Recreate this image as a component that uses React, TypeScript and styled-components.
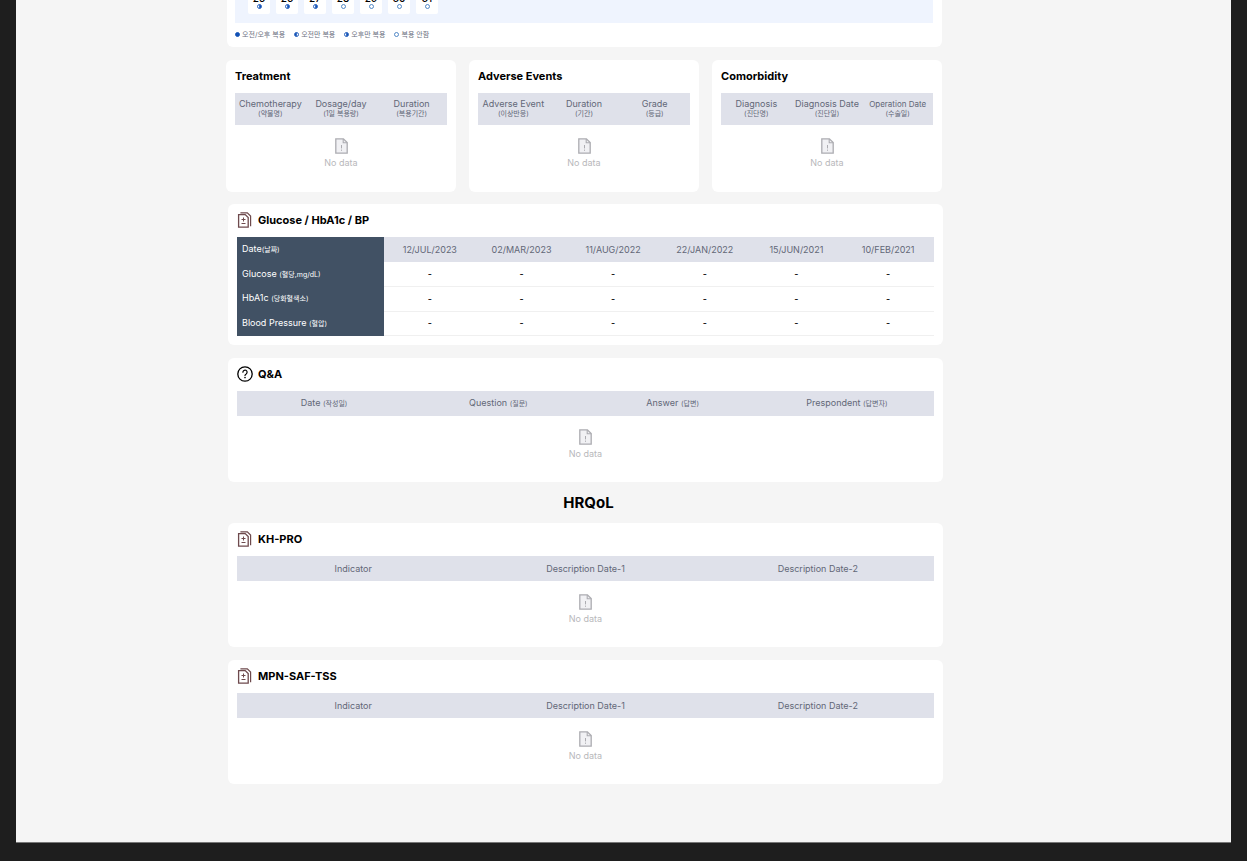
import React from "react";
import styled, { createGlobalStyle } from "styled-components";

const GlobalStyle = createGlobalStyle`
  * { box-sizing: border-box; }
  body {
    margin: 0;
    background: #1e1e1e;
    color: #000;
    font-family: Inter, "Noto Sans CJK KR", sans-serif;
  }
`;

const Page = styled.div`
  min-height: 100vh;
  padding: 0 16px 18px;
  background: #1e1e1e;
`;

const Sheet = styled.main`
  padding: 0 288px 58px 210px;
  background: #f5f5f5;
  border-bottom: 1px solid #777;
`;

const Overview = styled.div`
  display: flex;
  flex-direction: column;
  gap: 13px;
  margin-right: 1px;
`;

const Sections = styled.div`
  display: flex;
  flex-direction: column;
  gap: 13px;
  margin: 12px 0 0 2px;
`;

const Card = styled.section`
  padding: 0 9px 9px;
  background: #fff;
  border-radius: 6px;
`;

const CalendarCard = styled.section`
  display: flex;
  flex-direction: column;
  justify-content: flex-end;
  height: 47px;
  margin-left: 1px;
  padding: 0 9px 7px 8px;
  overflow: hidden;
  background: #fff;
  border-radius: 0 0 6px 6px;
`;

const Week = styled.div`
  display: flex;
  flex: none;
  gap: 6px;
  padding: 0 13px 9px;
  background: #eff4fe;
`;

const Day = styled.div`
  display: flex;
  flex-direction: column;
  align-items: center;
  gap: 1px;
  width: 22px;
  padding: 3px 0 5px;
  background: #fff;
  border-radius: 2px;
  font-size: 10px;
  font-weight: 500;
  line-height: 10px;
`;

const Legend = styled.ul`
  display: flex;
  flex: none;
  gap: 9px;
  margin: 6px 0 0;
  padding: 0;
  list-style: none;
`;

const LegendItem = styled.li`
  display: flex;
  align-items: center;
  gap: 2px;
  color: #6b7080;
  font-size: 7px;
  line-height: 11px;
  white-space: nowrap;
`;

const Trio = styled.div`
  display: grid;
  grid-template-columns: repeat(3, 1fr);
  gap: 13px;
`;

const SmallCard = styled(Card)`
  height: 132px;
`;

const CardHead = styled.div`
  display: flex;
  align-items: center;
  gap: 5px;
  height: 33px;
  padding-bottom: 1px;
`;

const CardTitle = styled.h2`
  margin: 0;
  font-size: 11px;
  font-weight: 700;
  line-height: 16px;
`;

const GroupTitle = styled.h1`
  margin: 0;
  padding-left: 6px;
  font-size: 15px;
  font-weight: 700;
  line-height: 15px;
  text-align: center;
`;

const Table = styled.table`
  width: 100%;
  border-collapse: collapse;
  table-layout: fixed;
  font-size: 9px;
  line-height: 12px;
`;

const HeadCell = styled.th<{ $tall?: boolean }>`
  height: ${(p) => (p.$tall ? 32 : 25)}px;
  padding: 0;
  background: #dfe1ea;
  color: #626777;
  font-weight: 400;
  line-height: ${(p) => (p.$tall ? 10 : 12)}px;
  text-align: center;
  white-space: nowrap;
`;

const Compact = styled.span`
  font-size: 8px;
`;

const Korean = styled.span<{ $block?: boolean }>`
  display: ${(p) => (p.$block ? "block" : "inline")};
  font-size: 7px;
`;

const VitalsTable = styled(Table)`
  height: 99px;
`;

const LabelCol = styled.col`
  width: 147px;
`;

const RowLabel = styled.th`
  height: 24px;
  padding: 0 5px;
  background: #415164;
  color: #fff;
  font-weight: 400;
  text-align: left;
  white-space: nowrap;
`;

const ValueCell = styled.td`
  padding: 0;
  border-bottom: 1px solid #f0f0f0;
  font-weight: 500;
  text-align: center;
`;

const EmptyCell = styled.td`
  height: 57px;
  padding: 13px 0 0;
  vertical-align: top;
`;

const Empty = styled.div`
  display: flex;
  flex-direction: column;
  align-items: center;
  gap: 3px;
  color: #b8b8bb;
  font-size: 9px;
  line-height: 12px;
`;

type DoseKind = "both" | "am" | "pm" | "none";

const Dose = ({ kind }: { kind: DoseKind }) => (
  <svg width="5" height="5" viewBox="0 0 10 10" aria-hidden="true">
    <circle cx="5" cy="5" r="4" fill={kind === "both" ? "#1251b5" : "#fff"} stroke={kind === "none" ? "#3f7cc0" : "#1251b5"} strokeWidth="1.8" />
    {kind === "am" && <path d="M5.6 1a4 4 0 0 0 0 8z" fill="#1251b5" />}
    {kind === "pm" && <path d="M4.4 1a4 4 0 0 1 0 8z" fill="#1251b5" />}
  </svg>
);

const NoData = () => (
  <Empty>
    <svg width="13" height="16" viewBox="0 0 13 16" fill="none" stroke="#acacb1" aria-hidden="true">
      <path d="M.8.8h7.6l3.8 3.8v10.6H.8z" fill="#f1f1f4" strokeWidth="1.3" />
      <path d="M8.2 1v3.8h3.8" strokeWidth="1.1" />
      <path d="M6.5 7v3.4M6.5 11.6v1.2" strokeWidth="1" />
    </svg>
    No data
  </Empty>
);

const RecordIcon = () => (
  <svg width="16" height="16" viewBox="0 0 16 16" fill="none" stroke="#6e4a4d" aria-hidden="true">
    <path d="M3.4.8h6.9l3.3 3.3v10.1" strokeWidth="1.2" />
    <path d="M1.6 2.6h6.6l3 3v9.6H1.6z" strokeWidth="1.3" />
    <path d="M6.5 5.5v4M4.5 7.5h4M4.5 11.5h4" strokeWidth="1" />
  </svg>
);

const QuestionIcon = () => (
  <svg width="16" height="16" viewBox="0 0 16 16" fill="none" stroke="#000" strokeLinecap="round" aria-hidden="true">
    <circle cx="8" cy="8" r="7.2" strokeWidth="1.3" />
    <path d="M5.9 6.2a2.1 2.1 0 1 1 3.3 1.7c-.8.5-1.2.8-1.2 1.6" strokeWidth="1.2" />
    <circle cx="8" cy="11.6" r=".8" fill="#000" stroke="none" />
  </svg>
);

const days: [number, DoseKind][] = [
  [25, "pm"], [26, "pm"], [27, "pm"], [28, "none"], [29, "none"], [30, "none"], [31, "none"],
];

const legend: [DoseKind, string][] = [
  ["both", "오전/오후 복용"], ["am", "오전만 복용"], ["pm", "오후만 복용"], ["none", "복용 안함"],
];

type Column = { label: string; ko?: string; compact?: boolean };

const summaries: { title: string; columns: Column[] }[] = [
  {
    title: "Treatment",
    columns: [
      { label: "Chemotherapy", ko: "(약물명)" },
      { label: "Dosage/day", ko: "(1일 복용량)" },
      { label: "Duration", ko: "(복용기간)" },
    ],
  },
  {
    title: "Adverse Events",
    columns: [
      { label: "Adverse Event", ko: "(이상반응)" },
      { label: "Duration", ko: "(기간)" },
      { label: "Grade", ko: "(등급)" },
    ],
  },
  {
    title: "Comorbidity",
    columns: [
      { label: "Diagnosis", ko: "(진단명)" },
      { label: "Diagnosis Date", ko: "(진단일)" },
      { label: "Operation Date", ko: "(수술일)", compact: true },
    ],
  },
];

const dates = ["12/JUL/2023", "02/MAR/2023", "11/AUG/2022", "22/JAN/2022", "15/JUN/2021", "10/FEB/2021"];

const vitals: [string, string][] = [
  ["Glucose ", "(혈당,mg/dL)"], ["HbA1c ", "(당화혈색소)"], ["Blood Pressure ", "(혈압)"],
];

const qaColumns: Column[] = [
  { label: "Date", ko: "(작성일)" },
  { label: "Question", ko: "(질문)" },
  { label: "Answer", ko: "(답변)" },
  { label: "Prespondent", ko: "(답변자)" },
];

const surveyColumns: Column[] = [
  { label: "Indicator" }, { label: "Description Date-1" }, { label: "Description Date-2" },
];

const EmptyTable = ({ columns, tall }: { columns: Column[]; tall?: boolean }) => (
  <Table>
    <thead>
      <tr>
        {columns.map((c) => (
          <HeadCell key={c.label} scope="col" $tall={tall}>
            {c.compact ? <Compact>{c.label}</Compact> : c.label}
            {c.ko && !tall && " "}
            {c.ko && <Korean $block={tall}>{c.ko}</Korean>}
          </HeadCell>
        ))}
      </tr>
    </thead>
    <tbody>
      <tr>
        <EmptyCell colSpan={columns.length}>
          <NoData />
        </EmptyCell>
      </tr>
    </tbody>
  </Table>
);

const Section = ({ title, icon, children }: { title: string; icon: React.ReactNode; children: React.ReactNode }) => (
  <Card>
    <CardHead>
      {icon}
      <CardTitle>{title}</CardTitle>
    </CardHead>
    {children}
  </Card>
);

export default function App() {
  return (
    <Page>
      <GlobalStyle />
      <Sheet>
        <Overview>
          <CalendarCard>
            <Week>
              {days.map(([day, kind]) => (
                <Day key={day}>
                  {day}
                  <Dose kind={kind} />
                </Day>
              ))}
            </Week>
            <Legend>
              {legend.map(([kind, text]) => (
                <LegendItem key={kind}>
                  <Dose kind={kind} />
                  {text}
                </LegendItem>
              ))}
            </Legend>
          </CalendarCard>
          <Trio>
            {summaries.map((s) => (
              <SmallCard key={s.title}>
                <CardHead>
                  <CardTitle>{s.title}</CardTitle>
                </CardHead>
                <EmptyTable columns={s.columns} tall />
              </SmallCard>
            ))}
          </Trio>
        </Overview>
        <Sections>
          <Section title="Glucose / HbA1c / BP" icon={<RecordIcon />}>
            <VitalsTable>
              <colgroup>
                <LabelCol />
                <col span={6} />
              </colgroup>
              <thead>
                <tr>
                  <RowLabel scope="col">
                    Date<Korean>(날짜)</Korean>
                  </RowLabel>
                  {dates.map((d) => (
                    <HeadCell key={d} scope="col">{d}</HeadCell>
                  ))}
                </tr>
              </thead>
              <tbody>
                {vitals.map(([label, ko]) => (
                  <tr key={label}>
                    <RowLabel scope="row">
                      {label}
                      <Korean>{ko}</Korean>
                    </RowLabel>
                    {dates.map((d) => (
                      <ValueCell key={d}>-</ValueCell>
                    ))}
                  </tr>
                ))}
              </tbody>
            </VitalsTable>
          </Section>
          <Section title="Q&A" icon={<QuestionIcon />}>
            <EmptyTable columns={qaColumns} />
          </Section>
          <GroupTitle>HRQoL</GroupTitle>
          <Section title="KH-PRO" icon={<RecordIcon />}>
            <EmptyTable columns={surveyColumns} />
          </Section>
          <Section title="MPN-SAF-TSS" icon={<RecordIcon />}>
            <EmptyTable columns={surveyColumns} />
          </Section>
        </Sections>
      </Sheet>
    </Page>
  );
}
